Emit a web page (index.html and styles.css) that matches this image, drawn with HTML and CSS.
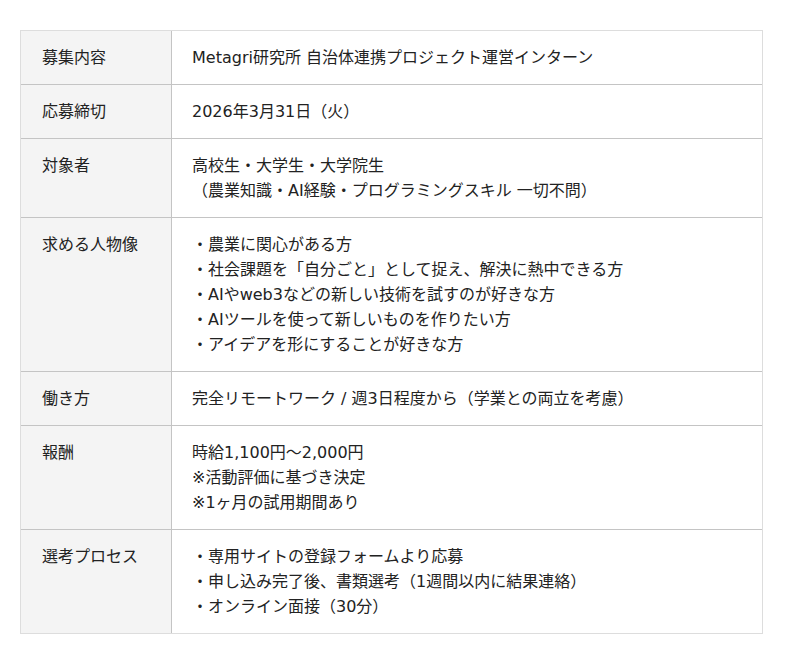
FILE: index.html
```html
<!DOCTYPE html>
<html lang="ja">
<head>
<meta charset="utf-8">
<title>募集要項</title>
<link rel="stylesheet" href="styles.css">
</head>
<body>
<div class="spec">
  <div class="row">
    <div class="label">募集内容</div>
    <div class="value">Metagri研究所 自治体連携プロジェクト運営インターン</div>
  </div>
  <div class="row">
    <div class="label">応募締切</div>
    <div class="value">2026年3月31日（火）</div>
  </div>
  <div class="row">
    <div class="label">対象者</div>
    <div class="value">高校生・大学生・大学院生<br>（農業知識・AI経験・プログラミングスキル 一切不問）</div>
  </div>
  <div class="row">
    <div class="label">求める人物像</div>
    <div class="value">・農業に関心がある方<br>・社会課題を「自分ごと」として捉え、解決に熱中できる方<br>・AIやweb3などの新しい技術を試すのが好きな方<br>・AIツールを使って新しいものを作りたい方<br>・アイデアを形にすることが好きな方</div>
  </div>
  <div class="row">
    <div class="label">働き方</div>
    <div class="value">完全リモートワーク / 週3日程度から（学業との両立を考慮）</div>
  </div>
  <div class="row">
    <div class="label">報酬</div>
    <div class="value">時給1,100円〜2,000円<br>※活動評価に基づき決定<br>※1ヶ月の試用期間あり</div>
  </div>
  <div class="row">
    <div class="label">選考プロセス</div>
    <div class="value">・専用サイトの登録フォームより応募<br>・申し込み完了後、書類選考（1週間以内に結果連絡）<br>・オンライン面接（30分）</div>
  </div>
</div>
</body>
</html>
```

FILE: styles.css
```css
html, body {
  margin: 0;
  padding: 0;
  background: #ffffff;
}

body {
  font-family: "DejaVu Sans", "Noto Sans CJK JP", sans-serif;
  font-size: 16px;
  line-height: 25px;
  color: #222222;
}

.spec {
  box-sizing: border-box;
  width: 743px;
  margin: 30px 0 0 20px;
  border: 1px solid #dddddd;
}

.row {
  display: flex;
  border-top: 1px solid #c4c4c4;
}

.row:first-child {
  border-top: none;
}

.label {
  box-sizing: border-box;
  flex: none;
  width: 151px;
  padding: 14px 20px 14px 21px;
  background: #f4f4f4;
  border-right: 1px solid #c4c4c4;
}

.value {
  flex: 1;
  padding: 14px 20px;
}
```
